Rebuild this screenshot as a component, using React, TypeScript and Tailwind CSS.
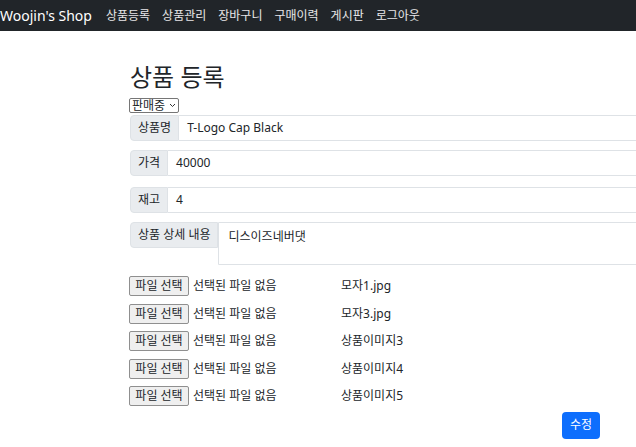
import React from "react";

const navLinks = ["상품등록", "상품관리", "장바구니", "구매이력", "게시판", "로그아웃"];

const images = ["모자1.jpg", "모자3.jpg", "상품이미지3", "상품이미지4", "상품이미지5"];

function Field({ label, value, className = "" }: { label: string; value: string; className?: string }) {
  return (
    <div className={`flex h-[26px] ${className}`}>
      <div className="flex items-center px-[7px] bg-[#e9ecef] border border-[#dee2e6] rounded-l-[4px] text-[12px] text-[#212529] whitespace-nowrap">
        {label}
      </div>
      <div className="flex-1 flex items-center px-[8px] border border-l-0 border-[#dee2e6] rounded-r-[4px] text-[12px] text-[#212529]">
        {value}
      </div>
    </div>
  );
}

export default function App() {
  return (
    <div
      className="w-[636px] h-[447px] overflow-hidden bg-white text-[#212529]"
      style={{ fontFamily: '"Noto Sans", "Noto Sans CJK KR", sans-serif' }}
    >
      <nav className="h-[31px] bg-[#212529] flex items-center">
        <span className="text-[14px] text-white mr-[8px] leading-none">Woojin's Shop</span>
        {navLinks.map((l) => (
          <span key={l} className="text-[12px] text-white/90 px-[6px] leading-none">
            {l}
          </span>
        ))}
      </nav>

      <div className="ml-[130px] w-[600px]">
        <h2 className="mt-[31px] text-[24px] leading-[30px] mb-[6px]">상품 등록</h2>
        <div className="flex w-[50px] items-center justify-between h-[15px] px-[2px] border border-[#767676] rounded-[2px] text-[12px] leading-none -ml-[1px]">
          판매중
          <svg width="7" height="5" viewBox="0 0 7 5" fill="none">
            <path d="M1 1l2.5 2.5L6 1" stroke="#333" strokeWidth="1" />
          </svg>
        </div>

        <Field label="상품명" value="T-Logo Cap Black" className="mt-[2px]" />
        <Field label="가격" value="40000" className="mt-[9px]" />
        <Field label="재고" value="4" className="mt-[11px]" />

        <div className="flex mt-[9px]">
          <div className="h-[26px] flex items-center px-[7px] bg-[#e9ecef] border border-[#dee2e6] rounded-l-[4px] text-[12px] whitespace-nowrap">
            상품 상세 내용
          </div>
          <div className="flex-1 h-[43px] px-[9px] pt-[5px] border border-[#dee2e6] text-[12px] rounded-r-[4px]">
            디스이즈네버댓
          </div>
        </div>

        <div className="mt-[11px] flex flex-col gap-[7.5px]">
          {images.map((img) => (
            <div key={img} className="flex items-center h-[20px] text-[12px]">
              <div className="-ml-[1px] h-[20px] w-[60px] flex items-center justify-center bg-[#efefef] border border-[#8f8f8f] rounded-[2px]">
                파일 선택
              </div>
              <span className="ml-[4px] w-[148px]">선택된 파일 없음</span>
              <span>{img}</span>
            </div>
          ))}
        </div>

        <div className="mt-[5px] ml-[432px]">
          <button className="h-[27px] w-[38px] bg-[#0d6efd] text-white text-[12px] rounded-[4px]">수정</button>
        </div>
      </div>
    </div>
  );
}
